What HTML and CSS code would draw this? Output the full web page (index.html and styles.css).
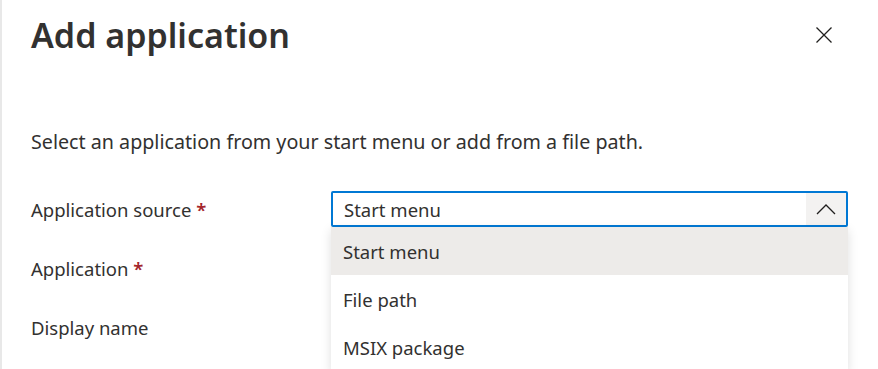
FILE: index.html
```html
<!DOCTYPE html>
<html lang="en">

<head>
  <meta charset="UTF-8">
  <meta name="viewport" content="width=device-width, initial-scale=1.0">
  <title>Add application</title>
  <link rel="stylesheet" href="styles.css">
</head>

<body>
  <div class="panel">
    <div class="panel-header">
      <h1>Add application</h1>
      <button class="close-btn" aria-label="Close">
        <svg width="16" height="16" viewBox="0 0 16 16">
          <path d="M0.5 0.5 L15.5 15.5 M15.5 0.5 L0.5 15.5" stroke="#201f1e" stroke-width="1.3" fill="none" />
        </svg>
      </button>
    </div>

    <p class="intro">Select an application from your start menu or add from a file path.</p>

    <div class="form-grid">
      <label class="field-label">Application source <span class="req">*</span></label>
      <div class="field">
        <div class="dropdown open">
          <span class="dropdown-value">Start menu</span>
          <span class="dropdown-caret">
            <svg width="20" height="11" viewBox="0 0 20 11">
              <path d="M1 10 L10 1 L19 10" stroke="#201f1e" stroke-width="1.3" fill="none" />
            </svg>
          </span>
        </div>
        <ul class="dropdown-list">
          <li class="selected">Start menu</li>
          <li>File path</li>
          <li>MSIX package</li>
        </ul>
      </div>

      <label class="field-label">Application <span class="req">*</span></label>
      <div class="field"></div>

      <label class="field-label">Display name</label>
      <div class="field"></div>
    </div>
  </div>
</body>
</html>
```

FILE: styles.css
```css
body {
  margin: 0;
  background-color: white;
  font-family: "Noto Sans", "Open Sans", sans-serif;
  color: #323130;
  overflow: hidden;
}
.panel {
  height: 369px;
  border-left: 2px solid #e8e8e8;
  padding: 0 30px 0 29px;
  box-sizing: border-box;
}
.panel-header {
  display: flex;
  justify-content: space-between;
  align-items: center;
  height: 70px;
}
h1 {
  margin: 0;
  font-size: 34px;
  font-weight: 600;
  color: #323130;
}
.close-btn {
  background: none;
  border: none;
  padding: 8px;
  margin-right: 8px;
  cursor: pointer;
  line-height: 0;
}
.intro {
  margin: 58px 0 0 0;
  font-size: 19.7px;
}
.form-grid {
  display: grid;
  grid-template-columns: 300px 517px;
  grid-auto-rows: 36px;
  row-gap: 23px;
  align-items: center;
  margin-top: 36px;
}
.field-label {
  font-size: 18.5px;
}
.req {
  color: #a4262c;
  font-weight: 600;
}
.field {
  position: relative;
  height: 36px;
}
.dropdown {
  display: flex;
  align-items: center;
  justify-content: space-between;
  height: 36px;
  box-sizing: border-box;
  border: 2px solid #0078d4;
  border-radius: 2px;
}
.dropdown-value {
  padding-left: 11px;
  font-size: 18.5px;
}
.dropdown-caret {
  display: flex;
  align-items: center;
  justify-content: center;
  width: 40px;
  height: 100%;
  background-color: #f3f2f1;
}
.dropdown-list {
  position: absolute;
  top: 36px;
  left: 0;
  right: 0;
  margin: 0;
  padding: 0;
  list-style: none;
  background-color: white;
  box-shadow: 0 3px 10px rgba(0, 0, 0, 0.13);
}
.dropdown-list li {
  height: 48px;
  line-height: 50px;
  padding-left: 12px;
  font-size: 18.5px;
}
.dropdown-list li.selected {
  background-color: #edebe9;
}
```
